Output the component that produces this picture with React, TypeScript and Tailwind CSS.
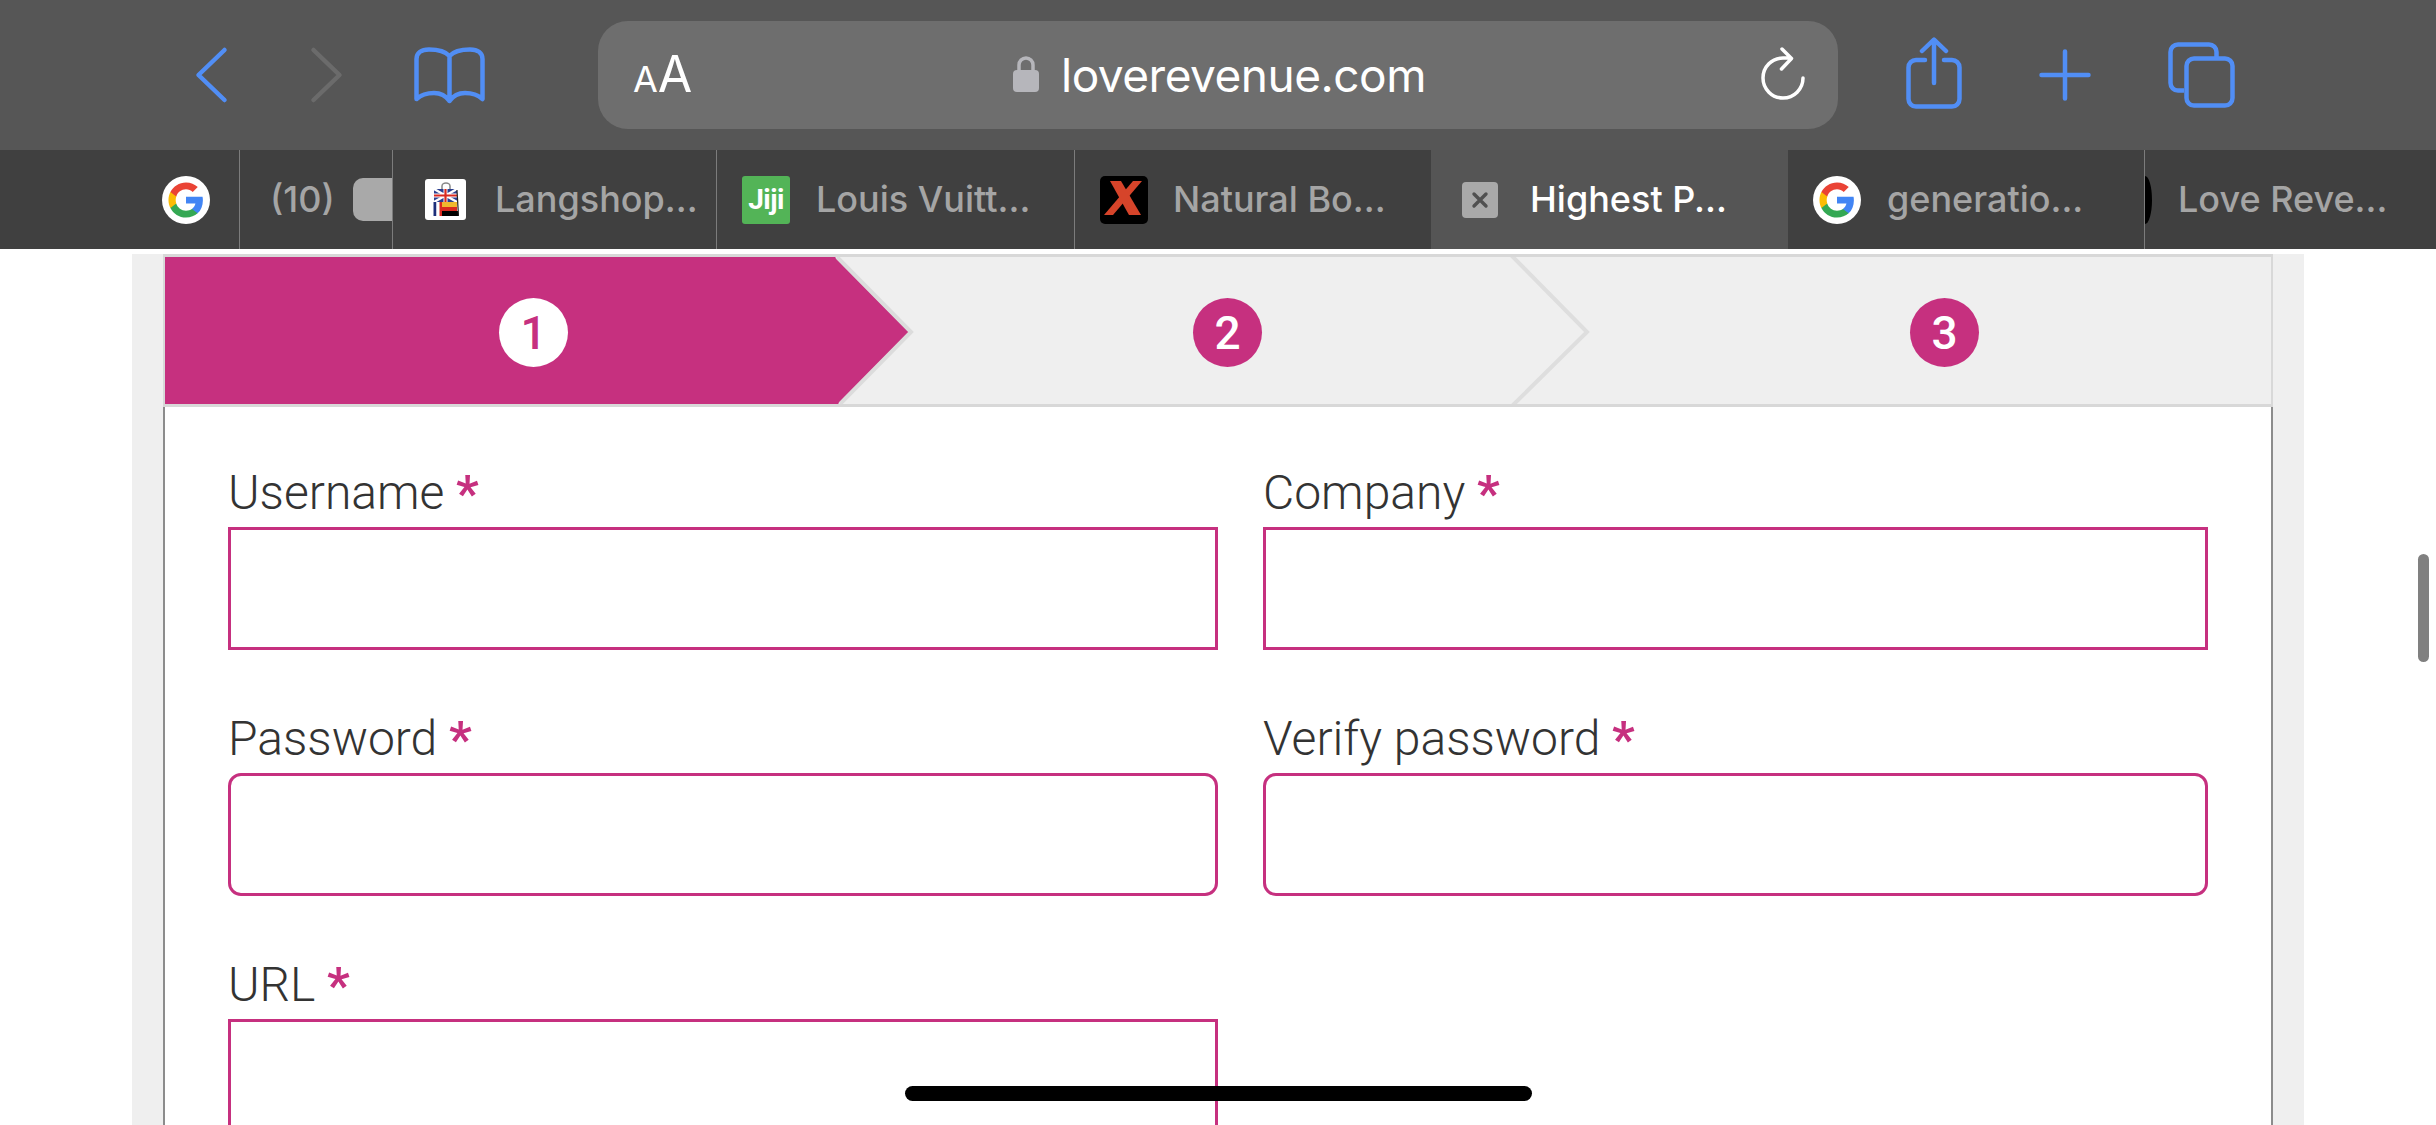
import React from 'react';

const pink = '#c6307f';
const blue = '#518ef5';

const GoogleIcon = () => (
  <svg width="48" height="48" viewBox="0 0 48 48" className="shrink-0">
    <circle cx="24" cy="24" r="24" fill="#fff" />
    <g transform="translate(4.800 4.800) scale(0.8)">
      <path fill="#4285f4" d="M45.100 24.500c0-1.600-.1-3.100-.4-4.500H24v8.500h11.800c-.5 2.800-2.100 5.100-4.400 6.700v5.500h7.100c4.200-3.800 6.600-9.500 6.600-16.200z" />
      <path fill="#34a853" d="M24 46c5.900 0 10.900-2 14.500-5.300l-7.100-5.500c-2 1.300-4.500 2.100-7.400 2.100-5.700 0-10.500-3.800-12.200-9H4.500v5.700C8.100 41.200 15.500 46 24 46z" />
      <path fill="#fbbc05" d="M11.800 28.300c-.4-1.300-.7-2.800-.7-4.300s.3-3 .7-4.300V14H4.500C3 17 2.100 20.400 2.100 24s.9 7 2.400 10l7.300-5.700z" />
      <path fill="#ea4335" d="M24 10.700c3.200 0 6.100 1.100 8.400 3.300l6.300-6.300C34.900 4.200 29.900 2 24 2 15.500 2 8.100 6.900 4.500 14l7.300 5.700c1.700-5.200 6.500-9 12.200-9z" />
    </g>
  </svg>
);

const LangshopIcon = () => (
  <div className="w-[41px] h-[41px] bg-white rounded-[3px] shrink-0 flex items-center justify-center">
    <svg width="26" height="35" viewBox="0 0 26 35">
      <path d="M9 8V4a4 3 0 0 1 8 0v4" fill="none" stroke="#888" strokeWidth="1.500" />
      <path d="M1 7h23v13H1z" fill="#2b3f8f" />
      <path d="M1 7l23 13M24 7L1 20" stroke="#fff" strokeWidth="2.500" />
      <path d="M12.500 7v13M1 13.500h23" stroke="#fff" strokeWidth="4" />
      <path d="M12.500 7v13M1 13.500h23" stroke="#d92a20" strokeWidth="2.200" />
      <path d="M0.500 20h3v14h-3z" fill="#1d2f7a" />
      <path d="M3.500 20h3v14h-3z" fill="#fff" />
      <path d="M6.500 20H9v14H6.500z" fill="#d92a20" />
      <path d="M9 20h15v5H9z" fill="#f0b92e" />
      <path d="M9 25h15v4H9z" fill="#d92a20" />
      <path d="M9 29h16v5H9z" fill="#000" />
      <path d="M24 8l1.500 26" stroke="#222" strokeWidth="1.200" />
    </svg>
  </div>
);

const JijiIcon = () => (
  <div className="w-[48px] h-[48px] bg-[#53b457] rounded-[3px] shrink-0 flex items-center justify-center text-white font-['Roboto',sans-serif] font-bold text-[28px] leading-none tracking-[-0.5px]">
    Jiji
  </div>
);

const XIcon = () => (
  <div className="w-[48px] h-[48px] bg-black rounded-[5px] shrink-0">
    <svg width="48" height="48" viewBox="0 0 48 48">
      <path d="M10 5h11l20 34H29z" fill="#d6442a" />
      <path d="M33 5h9L13 39H4z" fill="#d6442a" />
    </svg>
  </div>
);

const ClosedTabIcon = () => (
  <div className="w-[36px] h-[36px] bg-[#a9a9a9] rounded-[4px] shrink-0 flex items-center justify-center">
    <svg width="18" height="18" viewBox="0 0 18 18">
      <path d="M3 3l12 12M15 3L3 15" stroke="#505050" strokeWidth="3.400" strokeLinecap="round" />
    </svg>
  </div>
);

type TabProps = {
  width: number;
  children: React.ReactNode;
  active?: boolean;
  border?: boolean;
};

const tabText = "mb-[1px] font-['Inter',sans-serif] text-[36px] font-medium leading-none whitespace-nowrap";

const Tab = ({ width, children, active, border = true }: TabProps) => (
  <div
    className={`h-full shrink-0 flex items-center overflow-hidden ${active ? 'bg-[#555555]' : ''} ${border ? 'border-r border-[#7c7c7c]' : ''}`}
    style={{ width }}
  >
    {children}
  </div>
);

const Toolbar = () => (
  <div className="h-[150px] bg-[#565656] flex items-center relative">
    <svg width="35" height="58" viewBox="0 0 35 58" className="ml-[194px] shrink-0">
      <path d="M30.500 4L4.500 29l26 25" fill="none" stroke={blue} strokeWidth="4.500" strokeLinecap="round" strokeLinejoin="round" />
    </svg>
    <svg width="35" height="58" viewBox="0 0 35 58" className="ml-[80px] shrink-0">
      <path d="M4.500 4l26 25-26 25" fill="none" stroke="#6b6b6b" strokeWidth="4.500" strokeLinecap="round" strokeLinejoin="round" />
    </svg>
    <svg width="71" height="57" viewBox="0 0 71 57" className="ml-[70px] shrink-0">
      <path
        d="M35.500 9C31 4 24 2.500 15 2.500 7 2.500 2.500 6 2.500 12v40C8 47 14 46 20 46c7 0 12 3 15.500 8 3.500-5 8.500-8 15.500-8 6 0 12 1 17.500 6V12c0-6-4.500-9.500-12.500-9.500-9 0-16 1.500-20.500 6.500zM35.500 9v45"
        fill="none"
        stroke={blue}
        strokeWidth="4.500"
        strokeLinecap="round"
        strokeLinejoin="round"
      />
    </svg>
    <div className="ml-[113px] w-[1240px] h-[108px] bg-[#6e6e6e] rounded-[30px] shrink-0 flex items-center relative">
      <span className="ml-[35px] mb-[3px] font-['Inter',sans-serif] text-white leading-none flex items-baseline">
        <span className="text-[36px]">A</span>
        <span className="text-[50px]">A</span>
      </span>
      <div className="absolute left-[415px] top-[35px] flex items-start">
        <svg width="26" height="36" viewBox="0 0 26 36" className="shrink-0">
          <path d="M6 17V9a7 7 0 0 1 14 0v8" fill="none" stroke="#b6b6bb" strokeWidth="3.500" />
          <rect x="0" y="14" width="26" height="22" rx="4" fill="#b6b6bb" />
        </svg>
        <span className="ml-[22px] mt-[-4px] font-['Inter',sans-serif] text-white text-[46px] leading-none tracking-[-0.5px]">loverevenue.com</span>
      </div>
      <svg width="44" height="53" viewBox="0 0 44 53" className="absolute left-[1163px] top-[26px]">
        <path d="M42 31A20 20 0 1 1 22 11h7M21 2l9.500 9.500L20.500 22" fill="none" stroke="#fff" strokeWidth="3.500" strokeLinecap="round" strokeLinejoin="round" />
      </svg>
    </div>
    <svg width="56" height="72" viewBox="0 0 56 72" className="ml-[68px] mt-[-4px] shrink-0">
      <path
        d="M28 46V3M16 14L28 2.500 40 14M19 23h-9a7.500 7.500 0 0 0-7.500 7.500V62a7.500 7.500 0 0 0 7.500 7.500h36a7.500 7.500 0 0 0 7.500-7.500V30.500A7.500 7.500 0 0 0 46 23h-8"
        fill="none"
        stroke={blue}
        strokeWidth="4.500"
        strokeLinecap="round"
        strokeLinejoin="round"
      />
    </svg>
    <svg width="52" height="52" viewBox="0 0 52 52" className="ml-[77px] shrink-0">
      <path d="M26 2.500v47M2.500 26h47" fill="none" stroke={blue} strokeWidth="4.500" strokeLinecap="round" />
    </svg>
    <svg width="67" height="66" viewBox="0 0 67 66" className="ml-[77px] shrink-0">
      <path d="M16 48.500h-6A7.500 7.500 0 0 1 2.500 41V10A7.500 7.500 0 0 1 10 2.500h31A7.500 7.500 0 0 1 48.500 10v5" fill="none" stroke={blue} strokeWidth="4.500" />
      <rect x="18.500" y="16.500" width="46" height="47" rx="7.500" fill="none" stroke={blue} strokeWidth="4.500" />
    </svg>
  </div>
);

const TabStrip = () => (
  <div className="h-[99px] bg-[#404040] flex items-center">
    <Tab width={240}>
      <div className="ml-[162px]"><GoogleIcon /></div>
    </Tab>
    <Tab width={153}>
      <span className={`ml-[30px] text-[#a5a5a5] ${tabText}`}>(10)</span>
      <div className="ml-[18px] w-[40px] h-[43px] bg-[#a9a9a9] rounded-l-[10px] shrink-0" />
    </Tab>
    <Tab width={324}>
      <div className="ml-[32px]"><LangshopIcon /></div>
      <span className={`ml-[29px] text-[#a5a5a5] ${tabText}`}>Langshop...</span>
    </Tab>
    <Tab width={358}>
      <div className="ml-[25px]"><JijiIcon /></div>
      <span className={`ml-[26px] text-[#a5a5a5] ${tabText}`}>Louis Vuitt...</span>
    </Tab>
    <Tab width={356} border={false}>
      <div className="ml-[25px]"><XIcon /></div>
      <span className={`ml-[25px] text-[#a5a5a5] ${tabText}`}>Natural Bo...</span>
    </Tab>
    <Tab width={357} active border={false}>
      <div className="ml-[31px]"><ClosedTabIcon /></div>
      <span className={`ml-[32px] text-white ${tabText}`}>Highest P...</span>
    </Tab>
    <Tab width={357}>
      <div className="ml-[25px]"><GoogleIcon /></div>
      <span className={`ml-[26px] text-[#a5a5a5] ${tabText}`}>generatio...</span>
    </Tab>
    <Tab width={291} border={false}>
      <div className="w-[7px] h-[48px] bg-black rounded-r-[7px_24px] shrink-0" />
      <span className={`ml-[26px] text-[#a5a5a5] ${tabText}`}>Love Reve...</span>
    </Tab>
  </div>
);

const StepCircle = ({ left, n, current }: { left: number; n: number; current?: boolean }) => (
  <div
    className={`absolute top-[41px] w-[69px] h-[69px] rounded-full flex items-center justify-center font-['Roboto',sans-serif] text-[46px] font-medium leading-none ${current ? 'bg-white text-[#c6307f]' : 'bg-[#c6307f] text-white'}`}
    style={{ left }}
  >
    {n}
  </div>
);

const Stepper = () => (
  <div className="relative h-[153px] mx-[-2px] mt-[5px] bg-[#efefef] border-y-[3px] border-x-2 border-[#d8d8d8]">
    <svg width="760" height="147" viewBox="0 0 760 147" className="absolute left-0 top-0">
      <path d="M0 0H670L744 75L673 147H0z" fill={pink} />
      <path d="M670 0L744 75L673 147" fill="none" stroke="#dcdcdc" strokeWidth="4" transform="translate(2 0)" />
    </svg>
    <svg width="100" height="147" viewBox="0 0 100 147" className="absolute left-[1344px] top-0">
      <path d="M2 -2L78 75L3 149" fill="none" stroke="#dedede" strokeWidth="4" />
    </svg>
    <StepCircle left={334} n={1} current />
    <StepCircle left={1028} n={2} />
    <StepCircle left={1745} n={3} />
  </div>
);

const Field = ({ label, rounded }: { label: string; rounded?: boolean }) => (
  <div className="flex flex-col">
    <label className="h-[60px] font-['Roboto',sans-serif] font-light text-[48px] leading-[64px] text-[#333333] whitespace-nowrap">
      {label} <span className="text-[#c6307f] font-bold text-[50px] leading-none align-[-2px]">*</span>
    </label>
    <div className={`mt-[6px] h-[123px] border-[3px] border-[#c6307f] bg-white ${rounded ? 'rounded-[13px]' : ''}`} />
  </div>
);

export default function App() {
  return (
    <div className="relative w-[2436px] h-[1125px] overflow-hidden bg-white">
      <Toolbar />
      <TabStrip />
      <div className="ml-[132px] w-[2172px] h-[876px] bg-[#efefef] px-[31px]">
        <div className="h-full bg-white border-x-2 border-[#8c8c8c]">
          <Stepper />
          <div className="grid grid-cols-[990px_945px] gap-x-[45px] gap-y-[57px] pl-[63px] pt-[54px]">
            <Field label="Username" />
            <Field label="Company" />
            <Field label="Password" rounded />
            <Field label="Verify password" rounded />
            <Field label="URL" />
          </div>
        </div>
      </div>
      {/* scroll thumb + home bar sit on top of the page */}
      <div className="absolute left-[2418px] top-[554px] w-[11px] h-[108px] bg-[#808080] rounded-full" />
      <div className="absolute left-[905px] top-[1086px] w-[627px] h-[15px] bg-black rounded-full" />
    </div>
  );
}
